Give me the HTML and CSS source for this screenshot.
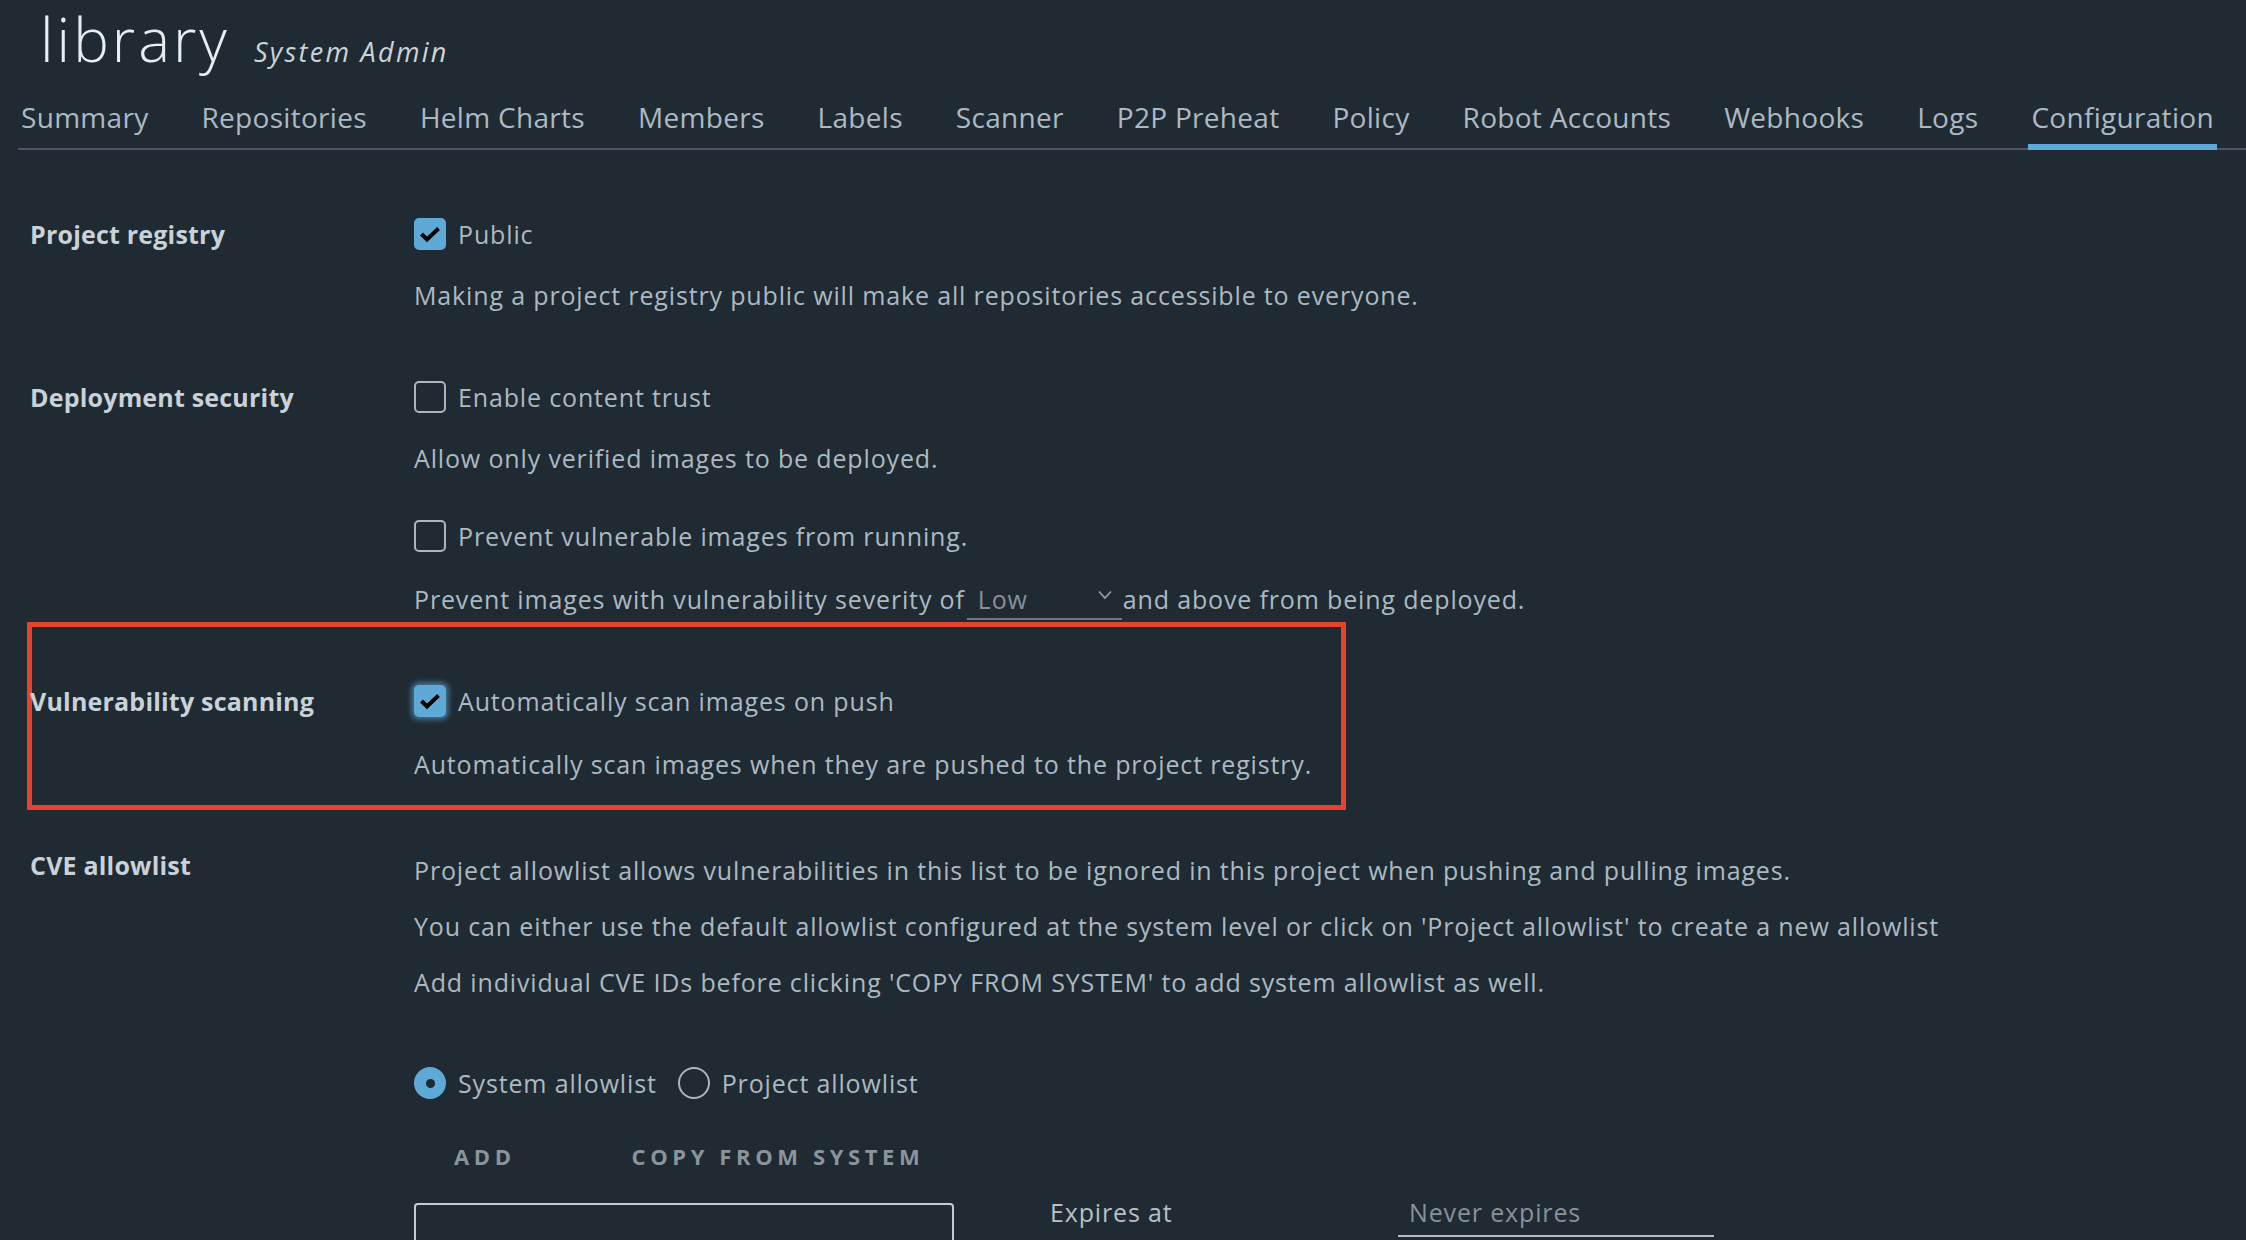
FILE: index.html
```html
<!DOCTYPE html>
<html lang="en">
<head>
<meta charset="utf-8">
<title>library - Configuration</title>
<link rel="stylesheet" href="styles.css">
</head>
<body>
<header class="page-head">
  <h1 class="title">library</h1>
  <span class="role">System Admin</span>
</header>
<nav class="tabs">
  <a class="tab">Summary</a>
  <a class="tab">Repositories</a>
  <a class="tab">Helm Charts</a>
  <a class="tab">Members</a>
  <a class="tab">Labels</a>
  <a class="tab">Scanner</a>
  <a class="tab">P2P Preheat</a>
  <a class="tab">Policy</a>
  <a class="tab">Robot Accounts</a>
  <a class="tab">Webhooks</a>
  <a class="tab">Logs</a>
  <a class="tab active">Configuration</a>
</nav>
<main class="config">
  <section class="row">
    <div class="label">Project registry</div>
    <div class="controls">
      <div class="check"><span class="box on"><svg viewBox="0 0 32 32" width="32" height="32"><path d="M7.5 16 L13 21.5 L24.5 10.5" fill="none" stroke="#000" stroke-width="4"/></svg></span><span>Public</span></div>
      <p class="desc">Making a project registry public will make all repositories accessible to everyone.</p>
    </div>
  </section>

  <section class="row row-deploy">
    <div class="label">Deployment security</div>
    <div class="controls">
      <div class="check"><span class="box"></span><span>Enable content trust</span></div>
      <p class="desc">Allow only verified images to be deployed.</p>
      <div class="check check-second"><span class="box"></span><span>Prevent vulnerable images from running.</span></div>
      <div class="severity">
        <span>Prevent images with vulnerability severity of</span>
        <span class="select"><span class="select-value">Low</span><svg class="chev" viewBox="0 0 14 10" width="14" height="10"><path d="M1 1.5 L7 8 L13 1.5" fill="none" stroke="#9aa3aa" stroke-width="1.6"/></svg></span>
        <span class="after-select">and above from being deployed.</span>
      </div>
    </div>
  </section>

  <section class="row row-vuln">
    <div class="label">Vulnerability scanning</div>
    <div class="controls">
      <div class="check"><span class="box on focus"><svg viewBox="0 0 32 32" width="32" height="32"><path d="M7.5 16 L13 21.5 L24.5 10.5" fill="none" stroke="#000" stroke-width="4"/></svg></span><span>Automatically scan images on push</span></div>
      <p class="desc desc-vuln">Automatically scan images when they are pushed to the project registry.</p>
    </div>
  </section>

  <section class="row row-cve">
    <div class="label label-cve">CVE allowlist</div>
    <div class="controls">
      <p class="line">Project allowlist allows vulnerabilities in this list to be ignored in this project when pushing and pulling images.</p>
      <p class="line line-next">You can either use the default allowlist configured at the system level or click on 'Project allowlist' to create a new allowlist</p>
      <p class="line line-next">Add individual CVE IDs before clicking 'COPY FROM SYSTEM' to add system allowlist as well.</p>
      <div class="radios">
        <span class="radio on"><span class="dot"></span></span><span class="radio-text">System allowlist</span>
        <span class="radio"></span><span class="radio-text">Project allowlist</span>
      </div>
      <div class="buttons">
        <span class="btn">ADD</span>
        <span class="btn">COPY FROM SYSTEM</span>
      </div>
      <div class="bottom">
        <div class="list-box"></div>
        <span class="expires-label">Expires at</span>
        <span class="expires-input">Never expires</span>
      </div>
    </div>
  </section>
</main>
</body>
</html>
```

FILE: styles.css
```css
html {
  background: #1f2a33;
}

html, body {
  margin: 0;
  padding: 0;
  overflow: hidden;
}

body {
  font-family: "Open Sans", "Liberation Sans", sans-serif;
  color: #adb9c2;
  width: 2246px;
  height: 1240px;
}

.page-head {
  display: flex;
  align-items: baseline;
  padding: 10px 0 0 40px;
}

.title {
  margin: 0;
  font-size: 60px;
  line-height: 58px;
  font-weight: 300;
  letter-spacing: 3px;
  color: #e9edf0;
}

.role {
  margin-left: 24px;
  font-size: 27px;
  font-style: italic;
  color: #cdd4d9;
  letter-spacing: 2.3px;
}

.tabs {
  display: flex;
  margin: 27px 0 0 18px;
  border-bottom: 2px solid #4a5663;
}

.tab {
  flex-shrink: 0;
  white-space: nowrap;
  font-size: 28px;
  line-height: 40px;
  letter-spacing: 0.3px;
  padding: 0 3px 7px;
  margin-right: 47px;
  margin-bottom: -2px;
  border-bottom: 6px solid transparent;
  color: #adb9c2;
}

.tab:last-child {
  margin-right: 0;
}

.tab.active {
  border-bottom-color: #5ea9d7;
}

.config {
  padding: 68px 0 0 30px;
  font-size: 25px;
  line-height: 32px;
  letter-spacing: 0.85px;
}

.row {
  display: grid;
  grid-template-columns: 384px 1fr;
}

.label {
  font-weight: 700;
  font-size: 25px;
  line-height: 32px;
  letter-spacing: 0.2px;
  color: #c9d2d8;
}

.controls {
  display: flex;
  flex-direction: column;
  align-items: flex-start;
}

.check {
  display: flex;
  align-items: center;
  gap: 12px;
  height: 32px;
}

.box {
  width: 32px;
  height: 32px;
  box-sizing: border-box;
  border: 2px solid #aab5bd;
  border-radius: 5px;
  display: block;
}

.box svg {
  display: block;
  margin: -2px;
}

.box.on {
  background: #5fa9d6;
  border-color: #5fa9d6;
}

.box.focus {
  box-shadow: 0 0 5px 3px rgba(95, 169, 214, 0.55);
}

.desc {
  margin: 29px 0 0;
}

.row-deploy {
  margin-top: 70px;
}

.check-second {
  margin-top: 46px;
}

.severity {
  display: flex;
  align-items: baseline;
  margin-top: 31px;
}

.select {
  display: inline-flex;
  align-items: center;
  width: 155px;
  box-sizing: border-box;
  margin-left: 2px;
  padding: 0 10px 3px 11px;
  border-bottom: 2px solid #6b7680;
}

.select-value {
  flex: 1;
  color: #87919a;
}

.chev {
  display: block;
  margin-bottom: 8px;
}

.after-select {
  margin-left: 1px;
}

.row-vuln {
  position: relative;
  margin-top: 65px;
}

.row-vuln::after {
  content: "";
  position: absolute;
  z-index: -1;
  left: -3px;
  top: -63px;
  width: 1319px;
  height: 188px;
  box-sizing: border-box;
  border: 5px solid #e5432b;
  pointer-events: none;
}

.desc-vuln {
  margin-top: 31px;
}

.row-cve {
  margin-top: 74px;
}

.label-cve {
  margin-top: -5px;
}

.line {
  margin: 0;
}

.line-next {
  margin-top: 24px;
}

.radios {
  display: flex;
  align-items: center;
  margin-top: 69px;
  height: 32px;
}

.radio {
  width: 32px;
  height: 32px;
  box-sizing: border-box;
  border-radius: 50%;
  border: 2px solid #aab5bd;
  display: flex;
  align-items: center;
  justify-content: center;
}

.radio.on {
  background: #5fa9d6;
  border-color: #5fa9d6;
}

.dot {
  width: 9px;
  height: 9px;
  border-radius: 50%;
  background: #1f2a33;
}

.radio-text {
  margin: 0 21px 0 12px;
}

.buttons {
  display: flex;
  gap: 36px;
  margin-top: 41px;
}

.btn {
  padding: 0 40px;
  font-size: 22px;
  font-weight: 700;
  letter-spacing: 4.6px;
  color: #8b949b;
  line-height: 32px;
}

.bottom {
  display: flex;
  align-items: flex-start;
  margin-top: 24px;
}

.list-box {
  width: 540px;
  height: 140px;
  box-sizing: border-box;
  margin-top: 7px;
  border: 2px solid #c5cbd0;
  border-radius: 4px;
}

.expires-label {
  margin-left: 96px;
  width: 348px;
  color: #b6c0c7;
}

.expires-input {
  width: 316px;
  box-sizing: border-box;
  padding: 0 0 7px 11px;
  border-bottom: 2px solid #b4bdc4;
  color: #87919a;
}
```
